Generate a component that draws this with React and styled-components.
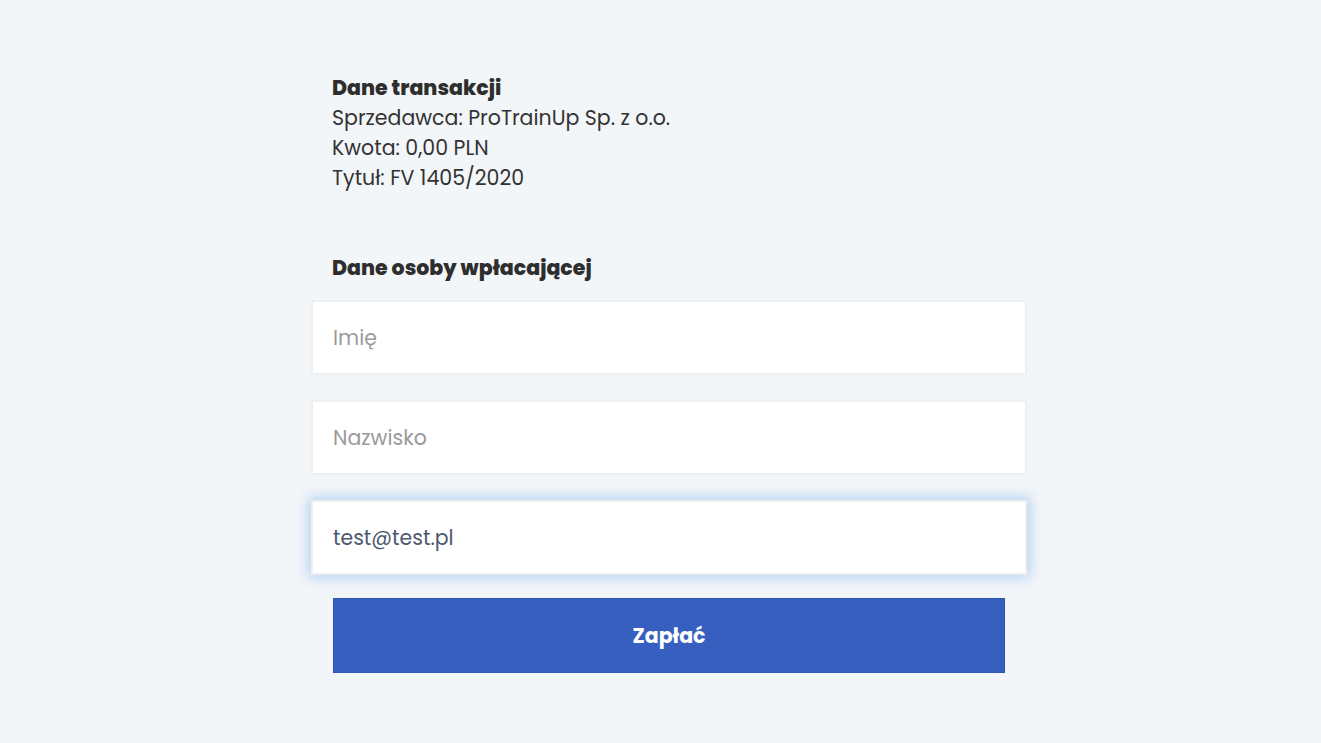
import React from "react";
import styled, { createGlobalStyle } from "styled-components";

const GlobalStyle = createGlobalStyle`
  body {
    margin: 0;
    background: #f3f6f9;
    font-family: "Poppins", "Inter", "Noto Sans", sans-serif;
    color: #333;
  }
`;

const Page = styled.div`
  min-height: 743px;
  display: flex;
  justify-content: center;
  padding-top: 73px;
  box-sizing: border-box;
`;

const Form = styled.form`
  width: 716px;
  margin-left: 17px;
  display: flex;
  flex-direction: column;
`;

const Section = styled.div`
  padding-left: 21px;
  font-size: 20.5px;
  line-height: 30px;
  color: #333;
  margin-bottom: ${(p) => p.gap || 0}px;
`;

const Heading = styled.div`
  font-weight: 800;
  color: #2e2e2e;
`;

const Line = styled.div`
  font-weight: 400;
`;

const Input = styled.input`
  height: 75px;
  box-sizing: border-box;
  border: 2px solid #efefef;
  background: #fff;
  padding: 0 20px;
  font-family: inherit;
  font-size: 20.5px;
  color: #4d5870;
  margin-bottom: 25px;
  outline: none;
  box-shadow: ${(p) => (p.focused ? "0 0 12px 3px rgba(120, 175, 235, 0.5)" : "none")};
  &::placeholder {
    color: #9a9a9a;
  }
`;

const PayButton = styled.button`
  margin: -2px 22px 0;
  height: 75px;
  border: 1px solid #2f56b0;
  background: #375fbf;
  color: #fff;
  font-family: inherit;
  font-size: 20.5px;
  font-weight: 700;
  cursor: pointer;
`;

export default function App() {
  return (
    <>
      <GlobalStyle />
      <Page>
        <Form onSubmit={(e) => e.preventDefault()}>
          <Section gap={60}>
            <Heading>Dane transakcji</Heading>
            <Line>Sprzedawca: ProTrainUp Sp. z o.o.</Line>
            <Line>Kwota: 0,00 PLN</Line>
            <Line>Tytuł: FV 1405/2020</Line>
          </Section>
          <Section gap={17}>
            <Heading>Dane osoby wpłacającej</Heading>
          </Section>
          <Input placeholder="Imię" />
          <Input placeholder="Nazwisko" />
          <Input defaultValue="test@test.pl" focused />
          <PayButton type="submit">Zapłać</PayButton>
        </Form>
      </Page>
    </>
  );
}
